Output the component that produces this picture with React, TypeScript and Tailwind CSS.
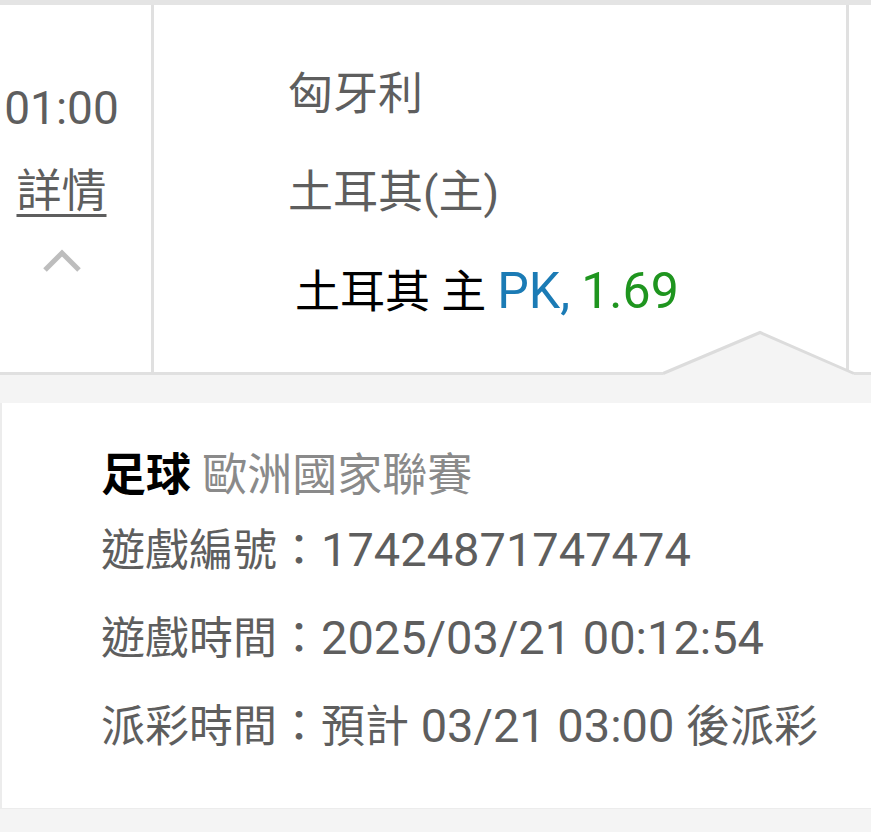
import React from "react";

const font = "font-['Roboto','Noto_Sans_CJK_TC',sans-serif]";

const DetailLine = ({ label, children }: { label: string; children: React.ReactNode }) => (
  <div className="h-[88px] leading-[88px] text-[44px] text-[#5e5e5e] whitespace-nowrap">
    {label}：{children}
  </div>
);

const Num = ({ children }: { children: React.ReactNode }) => (
  <span className="text-[47px]">{children}</span>
);

const App = () => {
  return (
    <div className={`relative w-[871px] h-[832px] bg-[#f4f4f4] overflow-hidden ${font}`}>
      <div className="h-[5px] bg-[#e4e4e4]" />

      {/* match row */}
      <div className="flex h-[370px] bg-white border-b-[3px] border-[#e0e0e0]">
        <div className="w-[151px] pr-[28px] flex flex-col items-center pt-[61px] text-[#5e5e5e]">
          <div className="h-[84px] leading-[84px] text-[46px]">01:00</div>
          <div className="h-[84px] leading-[84px] text-[45px] underline decoration-[3px] underline-offset-[7px]">
            詳情
          </div>
          <svg className="mt-[14px]" width="40" height="26" viewBox="0 0 40 26">
            <polyline
              points="3,22 20,5 37,22"
              fill="none"
              stroke="#bdbdbd"
              strokeWidth="5"
            />
          </svg>
        </div>
        <div className="w-[3px] bg-[#e0e0e0]" />
        <div className="w-[692px] pt-[41px] pl-[134px] text-[45px]">
          <div className="h-[98px] leading-[98px] text-[#5e5e5e]">匈牙利</div>
          <div className="h-[98px] leading-[98px] text-[#5e5e5e]">土耳其(主)</div>
          <div className="h-[98px] leading-[98px] pl-[7px] text-black whitespace-nowrap">
            土耳其 主 <span className="text-[50px] text-[#1b7bb5]">PK,</span>{" "}
            <span className="text-[50px] text-[#1f951f]">1.69</span>
          </div>
        </div>
        <div className="w-[3px] bg-[#e0e0e0]" />
        <div className="flex-1" />
      </div>

      {/* arrow pointing to the detail panel */}
      <svg
        className="absolute left-[663px] top-[330px]"
        width="192"
        height="48"
        viewBox="0 0 192 48"
      >
        <polygon points="0,43.5 97,2.5 191,43.5 191,48 0,48" fill="#f4f4f4" />
        <polyline
          points="0,43.5 97,2.5 191,43.5"
          fill="none"
          stroke="#dcdcdc"
          strokeWidth="3"
        />
      </svg>

      {/* detail panel */}
      <div className="mt-[28px] bg-white border-l-2 border-[#ececec] pt-[43px] pb-[38px] pl-[99px]">
        <div className="h-[60px] leading-[60px] text-[45px] whitespace-nowrap">
          <span className="font-bold text-black">足球</span>{" "}
          <span className="text-[#8a8a8a]">歐洲國家聯賽</span>
        </div>
        <DetailLine label="遊戲編號">
          <Num>17424871747474</Num>
        </DetailLine>
        <DetailLine label="遊戲時間">
          <Num>2025/03/21 00:12:54</Num>
        </DetailLine>
        <DetailLine label="派彩時間">
          預計<Num>{"\u00a003/21 03:00\u00a0"}</Num>後派彩
        </DetailLine>
      </div>
      <div className="h-px bg-[#ececec]" />
    </div>
  );
};

export default App;
